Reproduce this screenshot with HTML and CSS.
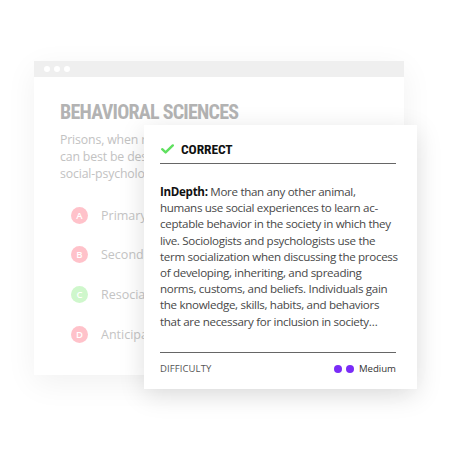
FILE: index.html
```html
<!DOCTYPE html>
<html>
<head>
<meta charset="utf-8">
<link rel="stylesheet" href="styles.css">
</head>
<body>
<div class="stage">
  <div class="window">
    <div class="titlebar">
      <span class="dot"></span><span class="dot"></span><span class="dot"></span>
    </div>
    <div class="content">
      <h1 class="title">BEHAVIORAL SCIENCES</h1>
      <p class="question">Prisons, when regarded as institutions of change,<br>can best be described by which of the following<br>social-psychological processes?</p>
      <ul class="options">
        <li class="option"><span class="badge wrong">A</span><span class="opt-text">Primary socialization</span></li>
        <li class="option"><span class="badge wrong">B</span><span class="opt-text">Secondary socialization</span></li>
        <li class="option"><span class="badge right">C</span><span class="opt-text">Resocialization</span></li>
        <li class="option"><span class="badge wrong">D</span><span class="opt-text">Anticipatory socialization</span></li>
      </ul>
    </div>
  </div>
  <div class="card">
    <div class="card-head">
      <svg class="check" width="13" height="10" viewBox="0 0 13 10"><path d="M1.2 5.2 L4.6 8.4 L11.8 1.4" fill="none" stroke="#5fe05f" stroke-width="2.4" stroke-linecap="round" stroke-linejoin="round"/></svg>
      <span class="status">CORRECT</span>
    </div>
    <p class="explain"><b>InDepth:</b> More than any other animal, humans use social experiences to learn ac&shy;ceptable behavior in the society in which they live. Sociologists and psychologists use the term socialization when discussing the process of developing, inheriting, and spreading norms, customs, and beliefs. Individuals gain the knowledge, skills, habits, and behaviors that are necessary for inclusion in society…</p>
    <div class="card-foot">
      <span class="label">DIFFICULTY</span>
      <span class="level"><span class="pip"></span><span class="pip"></span>Medium</span>
    </div>
  </div>
</div>
</body>
</html>
```
FILE: styles.css
```css
* { box-sizing: border-box; }
html, body { margin: 0; padding: 0; background: #fff; }
body { width: 450px; height: 450px; overflow: hidden; font-family: "Open Sans", sans-serif; }
.stage { position: relative; width: 450px; height: 450px; padding: 61px 0 0 34px; }
.window {
  width: 370px; height: 314px; background: #fff;
  box-shadow: 0 8px 30px rgba(0,0,0,0.06);
  overflow: hidden;
}
.titlebar {
  height: 16px; background: #efefef; display: flex; align-items: center;
  padding-left: 10px; gap: 4px;
}
.dot { width: 6px; height: 6px; border-radius: 50%; background: #fff; }
.content { padding: 22px 0 0 26px; }
.title {
  margin: 0; font-family: "Liberation Sans Narrow", "Roboto Condensed", sans-serif;
  font-weight: bold; font-size: 20px; line-height: 26px; color: #b3b3b3; letter-spacing: -0.75px;
}
.question {
  margin: 6px 0 0; font-size: 12.3px; line-height: 17px; color: #c2c2c2;
  letter-spacing: -0.15px; white-space: nowrap;
}
.options { list-style: none; margin: 25px 0 0; padding: 0 0 0 11px; }
.option { display: flex; align-items: center; height: 16px; margin-bottom: 23.8px; font-size: 12.5px; color: #c4c4c4; white-space: nowrap; }
.badge {
  width: 17px; height: 17px; border-radius: 50%; color: #fff; font-size: 9.5px; font-weight: 600;
  display: flex; align-items: center; justify-content: center; margin-right: 13px; flex: none;
}
.badge.wrong { background: #ffc2ca; }
.badge.right { background: #cff7cc; }
.card {
  position: absolute; left: 144px; top: 125px; width: 273px; height: 264px;
  background: #fff; box-shadow: 0 6px 24px rgba(0,0,0,0.13);
  padding: 16px 21px 0 16px;
}
.card-head {
  display: flex; align-items: center; border-bottom: 1px solid #666; padding-bottom: 6px; height: 23px;
}
.check { margin-right: 7px; margin-left: 1px; }
.status {
  font-family: "Liberation Sans Narrow", "Roboto Condensed", sans-serif; font-weight: bold;
  font-size: 13.5px; color: #111; letter-spacing: -0.1px;
}
.explain {
  margin: 20px -4px 0 0; font-size: 11.6px; line-height: 16.2px; color: #484848; hyphens: manual;
  letter-spacing: -0.32px; height: 130px;
}
.explain b { color: #111; font-weight: 700; }
.card-foot {
  margin-top: 38px; border-top: 1px solid #666; display: flex; justify-content: space-between; align-items: center;
  padding-top: 9px;
}
.label { font-size: 9.5px; color: #555; letter-spacing: 0.1px; line-height: 14px; }
.level { display: flex; align-items: center; font-size: 9.6px; color: #333; line-height: 14px; }
.pip { width: 8px; height: 8px; border-radius: 50%; background: #7a2cf7; margin-right: 4px; }
.pip:last-of-type { margin-right: 5px; }
```
